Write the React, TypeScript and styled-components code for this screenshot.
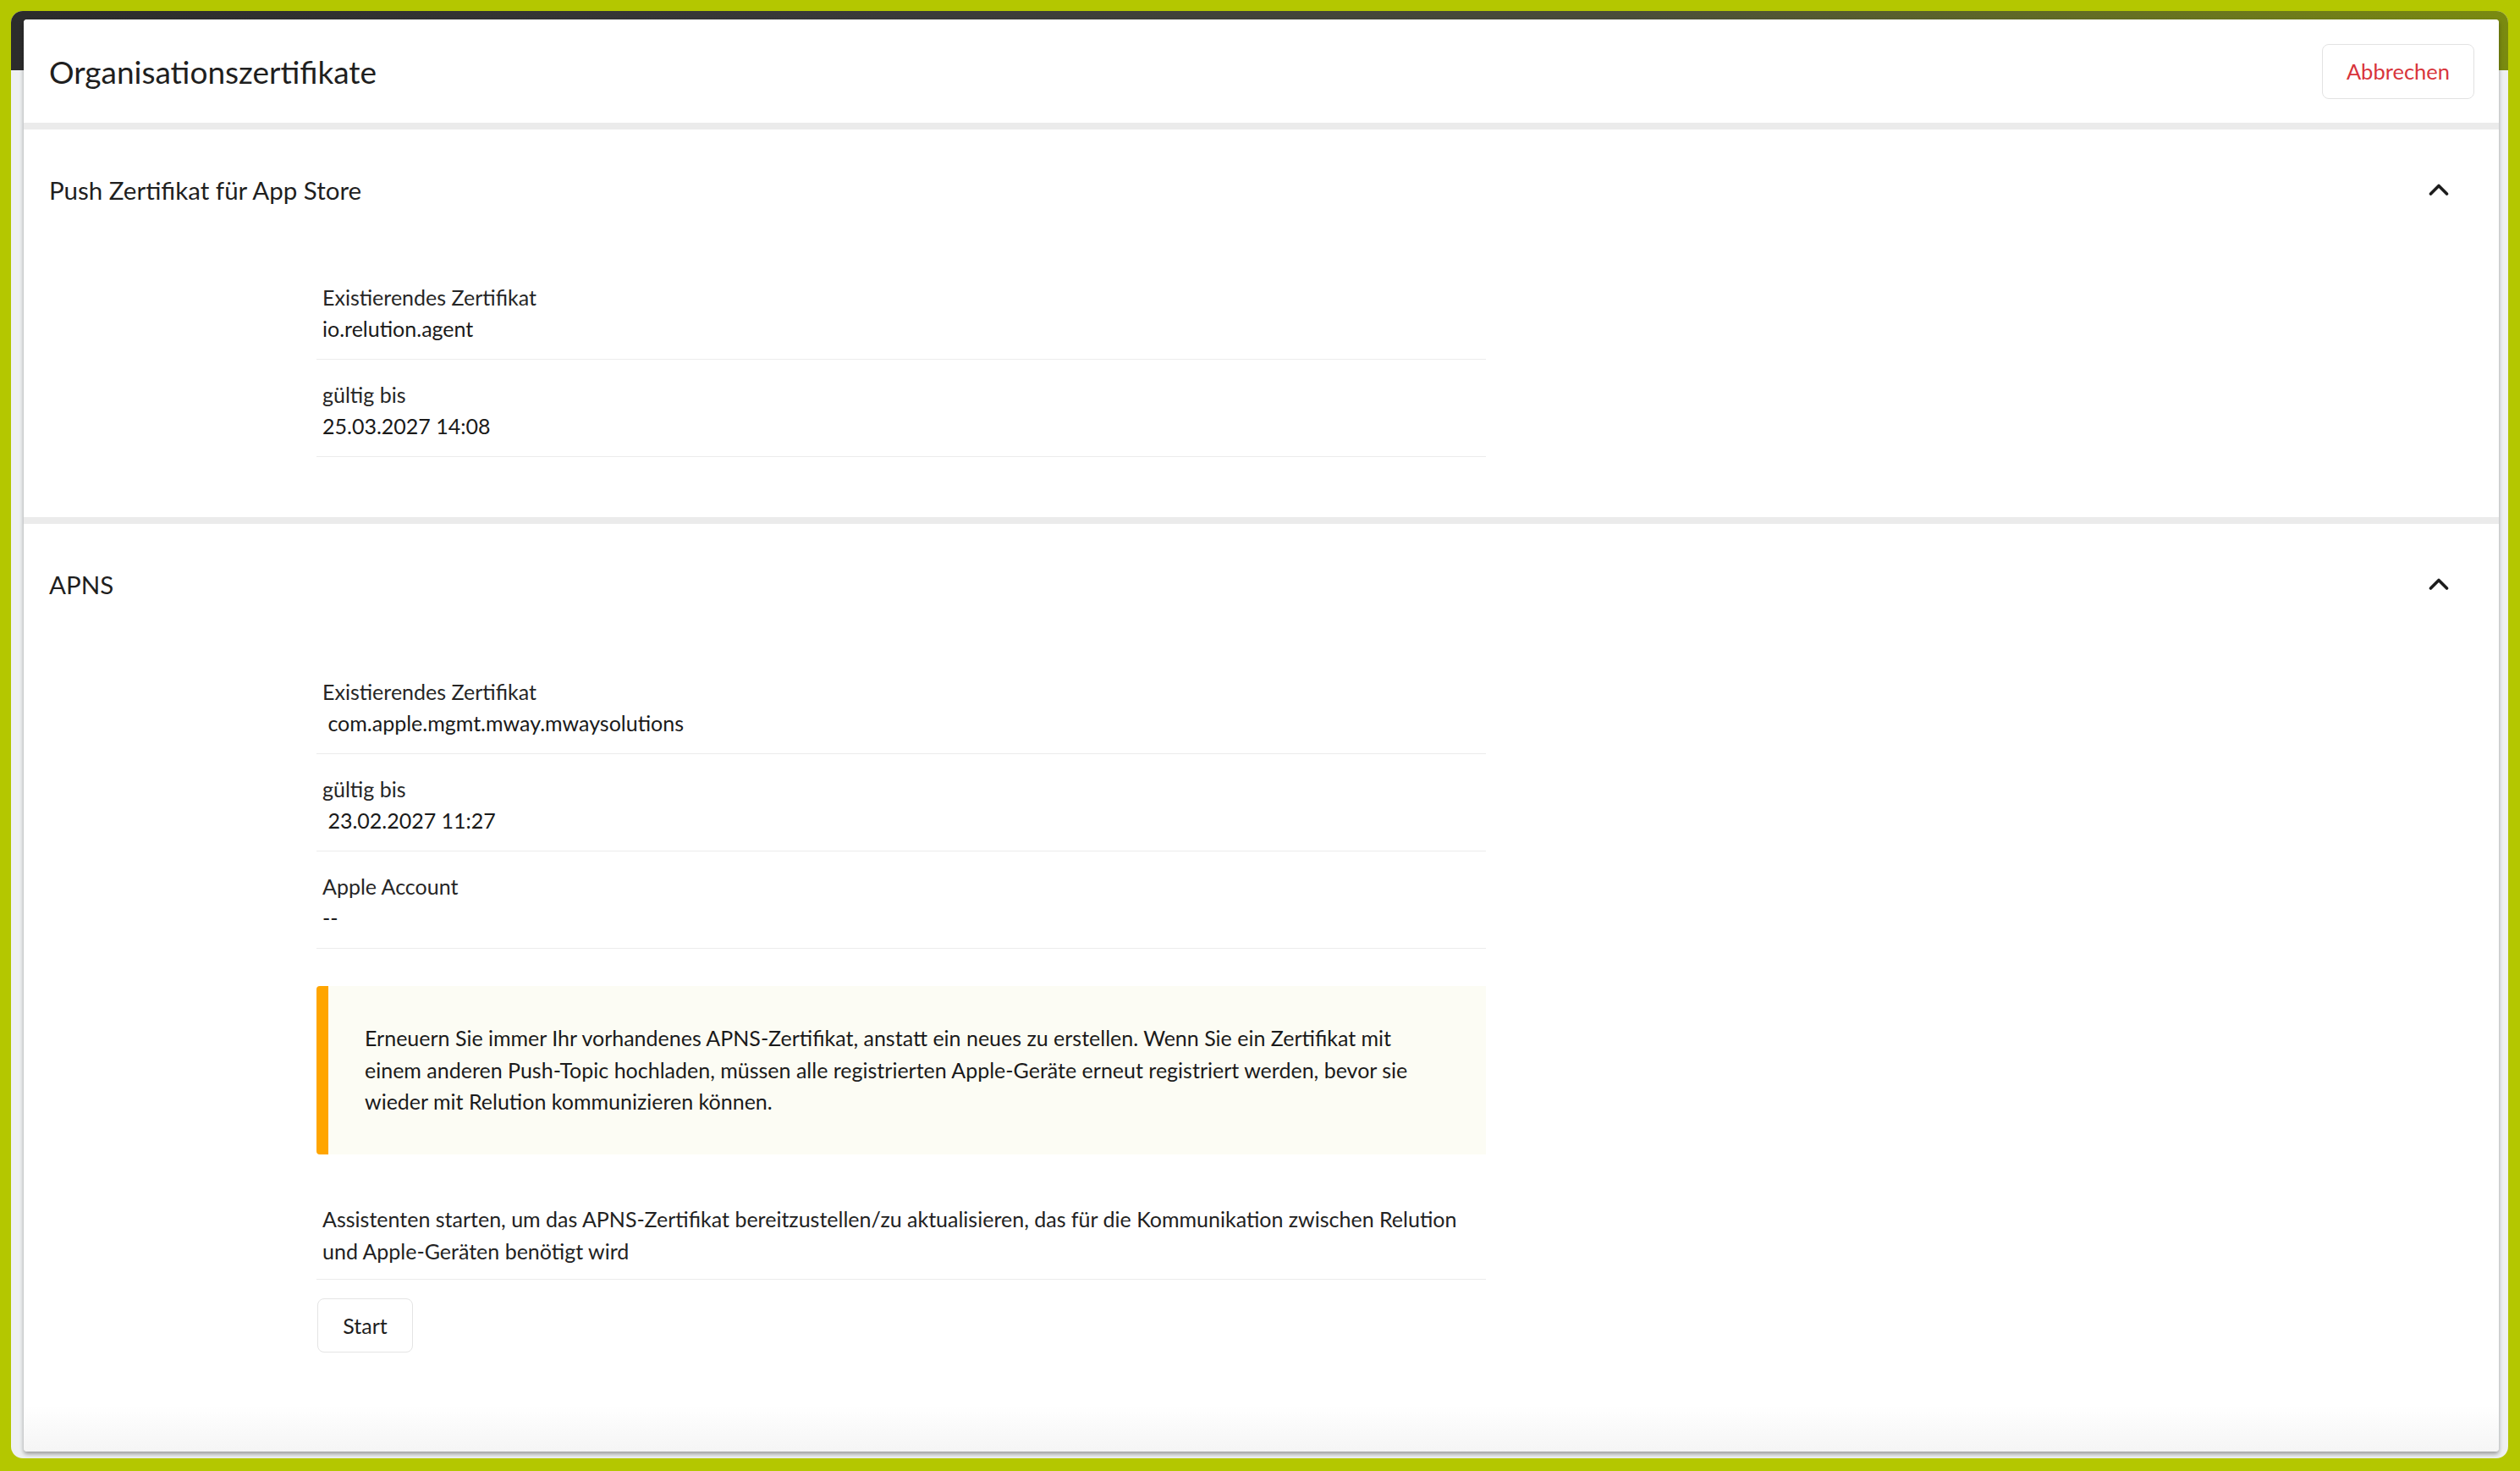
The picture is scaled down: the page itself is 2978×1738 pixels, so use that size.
import React from "react";
import styled, { createGlobalStyle } from "styled-components";

const GlobalStyle = createGlobalStyle`
  html, body { margin: 0; padding: 0; background: #b4c700; }
  * { box-sizing: border-box; }
  body { font-family: "Lato", "Noto Sans", sans-serif; color: #222; }
`;

const Screen = styled.div`
  width: 2978px;
  height: 1738px;
  padding: 13px 14px 15px 13px;
  background: #b4c700;
`;

const AppWindow = styled.div`
  position: relative;
  height: 100%;
  border-radius: 14px;
  background: #eef0f1;
  overflow: hidden;
`;

const TopBar = styled.div`
  height: 70px;
  background: linear-gradient(90deg, #2c2c2c 0%, #3a3a3a 35%, #4a4d3a 65%, #7a8a10 100%);
`;

const Modal = styled.div`
  position: absolute;
  left: 15px;
  top: 10px;
  right: 11px;
  bottom: 8px;
  display: flex;
  flex-direction: column;
  gap: 8px;
  background: #ebebeb;
  border-radius: 4px;
  box-shadow: 0 3px 5px rgba(0, 0, 0, 0.35);
  overflow: hidden;
`;

const HeaderCard = styled.header`
  height: 122px;
  flex: none;
  display: flex;
  align-items: center;
  justify-content: space-between;
  padding: 0 29px 0 30px;
  background: #fff;
`;

const Title = styled.h1`
  margin: 0;
  font-size: 37px;
  font-weight: 400;
  color: #1f1f1f;
`;

const CancelButton = styled.button`
  height: 65px;
  padding: 0 28px;
  border: 1.5px solid #e2e2e2;
  border-radius: 8px;
  background: #fff;
  color: #d8343b;
  font-family: inherit;
  font-size: 25.5px;
`;

const Card = styled.section<{ $grow?: boolean }>`
  flex: ${(p) => (p.$grow ? "1" : "none")};
  background: ${(p) =>
    p.$grow
      ? "linear-gradient(180deg, #fff 0%, #fff calc(100% - 54px), #f5f5f5 100%)"
      : "#fff"};
  padding-bottom: 71px;
`;

const CardHeader = styled.div`
  height: 142px;
  display: flex;
  align-items: center;
  justify-content: space-between;
  padding: 0 59px 0 30px;
`;

const CardTitle = styled.h2`
  margin: 0;
  font-size: 29.5px;
  font-weight: 400;
  color: #1f1f1f;
`;

const CardBody = styled.div`
  margin-left: 346px;
  width: 1382px;
  padding-top: 15px;
`;

const FieldRow = styled.div`
  padding: 23px 7px 17px;
  border-bottom: 1.5px solid #ececec;
  font-size: 25px;
  line-height: 37px;
`;

const FieldLabel = styled.div`
  color: #262626;
`;

const FieldValue = styled.div`
  color: #1a1a1a;
  white-space: pre;
`;

const Alert = styled.div`
  margin-top: 44px;
  padding: 43px 50px 43px 43px;
  border-left: 14px solid #ffa500;
  border-radius: 4px 0 0 4px;
  background: #fcfcf4;
  font-size: 25px;
  line-height: 37.5px;
  color: #1a1a1a;
`;

const InfoRow = styled(FieldRow)`
  margin-top: 36px;
  padding-top: 21px;
  padding-bottom: 14px;
  line-height: 38px;
`;

const StartButton = styled.button`
  margin: 22px 0 0 1px;
  height: 64px;
  width: 113px;
  border: 1.5px solid #e4e4e4;
  border-radius: 8px;
  background: #fff;
  color: #1f1f1f;
  font-family: inherit;
  font-size: 25px;
`;

const Chevron = () => (
  <svg width="24" height="14" viewBox="0 0 24 14" fill="none">
    <path d="M2.5 12 L12 2.5 L21.5 12" stroke="#1c1c1c" strokeWidth="3.6" strokeLinecap="round" strokeLinejoin="round" />
  </svg>
);

type Field = { label: string; value: string };

const Fields = ({ items }: { items: Field[] }) => (
  <>
    {items.map((f) => (
      <FieldRow key={f.label}>
        <FieldLabel>{f.label}</FieldLabel>
        <FieldValue>{f.value}</FieldValue>
      </FieldRow>
    ))}
  </>
);

export default function App() {
  return (
    <>
      <GlobalStyle />
      <Screen>
        <AppWindow>
          <TopBar />
          <Modal>
            <HeaderCard>
              <Title>Organisationszertifikate</Title>
              <CancelButton>Abbrechen</CancelButton>
            </HeaderCard>
            <Card>
              <CardHeader>
                <CardTitle>Push Zertifikat für App Store</CardTitle>
                <Chevron />
              </CardHeader>
              <CardBody>
                <Fields
                  items={[
                    { label: "Existierendes Zertifikat", value: "io.relution.agent" },
                    { label: "gültig bis", value: "25.03.2027 14:08" },
                  ]}
                />
              </CardBody>
            </Card>
            <Card $grow>
              <CardHeader>
                <CardTitle>APNS</CardTitle>
                <Chevron />
              </CardHeader>
              <CardBody>
                <Fields
                  items={[
                    { label: "Existierendes Zertifikat", value: " com.apple.mgmt.mway.mwaysolutions" },
                    { label: "gültig bis", value: " 23.02.2027 11:27" },
                    { label: "Apple Account", value: "--" },
                  ]}
                />
                <Alert>
                  Erneuern Sie immer Ihr vorhandenes APNS-Zertifikat, anstatt ein neues zu erstellen. Wenn Sie ein
                  Zertifikat mit einem anderen Push-Topic hochladen, müssen alle registrierten Apple-Geräte erneut
                  registriert werden, bevor sie wieder mit Relution kommunizieren können.
                </Alert>
                <InfoRow>
                  Assistenten starten, um das APNS-Zertifikat bereitzustellen/zu aktualisieren, das für die
                  Kommunikation zwischen Relution und Apple-Geräten benötigt wird
                </InfoRow>
                <StartButton>Start</StartButton>
              </CardBody>
            </Card>
          </Modal>
        </AppWindow>
      </Screen>
    </>
  );
}
